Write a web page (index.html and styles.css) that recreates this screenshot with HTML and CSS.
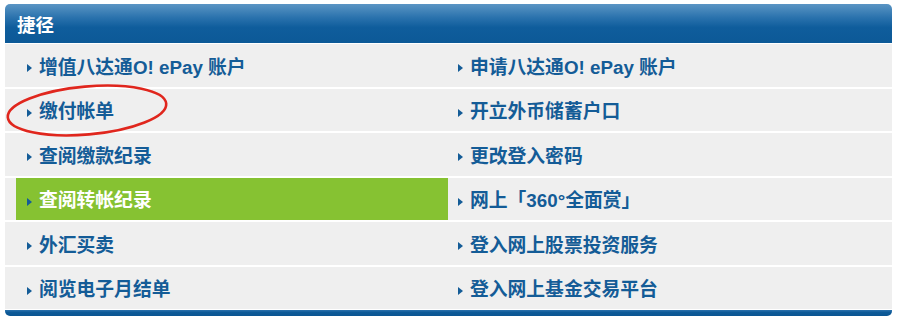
FILE: index.html
```html
<!DOCTYPE html>
<html lang="zh-CN">
<head>
<meta charset="utf-8">
<title>捷径</title>
<link rel="stylesheet" href="styles.css">
</head>
<body>
<div class="panel">
  <div class="header">捷径</div>
  <div class="rows">
    <div class="cell left"><a class="item"><span class="arrow"></span><span>增值八达通O! ePay 账户</span></a></div>
    <div class="cell right"><a class="item"><span class="arrow"></span><span>申请八达通O! ePay 账户</span></a></div>
    <div class="cell left"><a class="item"><span class="arrow"></span><span>缴付帐单</span></a></div>
    <div class="cell right"><a class="item"><span class="arrow"></span><span>开立外币储蓄户口</span></a></div>
    <div class="cell left"><a class="item"><span class="arrow"></span><span>查阅缴款纪录</span></a></div>
    <div class="cell right"><a class="item"><span class="arrow"></span><span>更改登入密码</span></a></div>
    <div class="cell left"><a class="item active"><span class="arrow"></span><span>查阅转帐纪录</span></a></div>
    <div class="cell right"><a class="item"><span class="arrow"></span><span>网上「360°全面赏」</span></a></div>
    <div class="cell left"><a class="item"><span class="arrow"></span><span>外汇买卖</span></a></div>
    <div class="cell right"><a class="item"><span class="arrow"></span><span>登入网上股票投资服务</span></a></div>
    <div class="cell left"><a class="item"><span class="arrow"></span><span>阅览电子月结单</span></a></div>
    <div class="cell right"><a class="item"><span class="arrow"></span><span>登入网上基金交易平台</span></a></div>
  </div>
  <div class="footer"></div>
  <svg class="mark" width="887" height="316" viewBox="0 0 887 316">
    <ellipse cx="82" cy="106.5" rx="79.5" ry="24" transform="rotate(-5 82 106.5)" fill="none" stroke="#e0261d" stroke-width="2.6"/>
  </svg>
</div>
</body>
</html>
```

FILE: styles.css
```css
html, body {
  margin: 0;
  padding: 0;
  background: #ffffff;
}

body {
  font-family: "Liberation Sans", "Noto Sans CJK SC", sans-serif;
  font-weight: bold;
}

.panel {
  position: relative;
  width: 887px;
  margin: 4px 0 0 5px;
}

.header {
  height: 39px;
  box-sizing: border-box;
  padding-left: 12px;
  display: flex;
  align-items: center;
  color: #ffffff;
  font-size: 18.5px;
  font-family: "Noto Sans CJK SC", sans-serif;
  font-weight: bold;
  border-radius: 5px 5px 0 0;
  background: linear-gradient(#5a95c4 0%, #2a72ad 35%, #0f5d9c 60%, #0c5997 100%);
}

.rows {
  margin-top: 1px;
  display: grid;
  grid-template-columns: 445px 442px;
  grid-auto-rows: 42.5px;
  row-gap: 2px;
  background: #ffffff;
}

.cell {
  background: #efefef;
  display: flex;
}

.cell.left {
  padding: 0 2px 0 11px;
}

.item {
  flex: 1;
  display: flex;
  align-items: center;
  color: #145c97;
  font-size: 18.8px;
  text-decoration: none;
  cursor: pointer;
}

.cell.left .item {
  padding-left: 11px;
}

.cell.right .item {
  padding-left: 8px;
}

.item.active {
  background: #86c232;
  color: #ffffff;
}

.arrow {
  width: 0;
  height: 0;
  border-left: 5px solid #145c97;
  border-top: 4px solid transparent;
  border-bottom: 4px solid transparent;
  margin: 6px 7px 0 0;
}

.footer {
  margin-top: 1px;
  height: 6px;
  border-radius: 0 0 5px 5px;
  background: linear-gradient(#2c72ad 0%, #0d5a98 40%, #0b5592 100%);
}

.mark {
  position: absolute;
  left: 0;
  top: 0;
  pointer-events: none;
}
```
